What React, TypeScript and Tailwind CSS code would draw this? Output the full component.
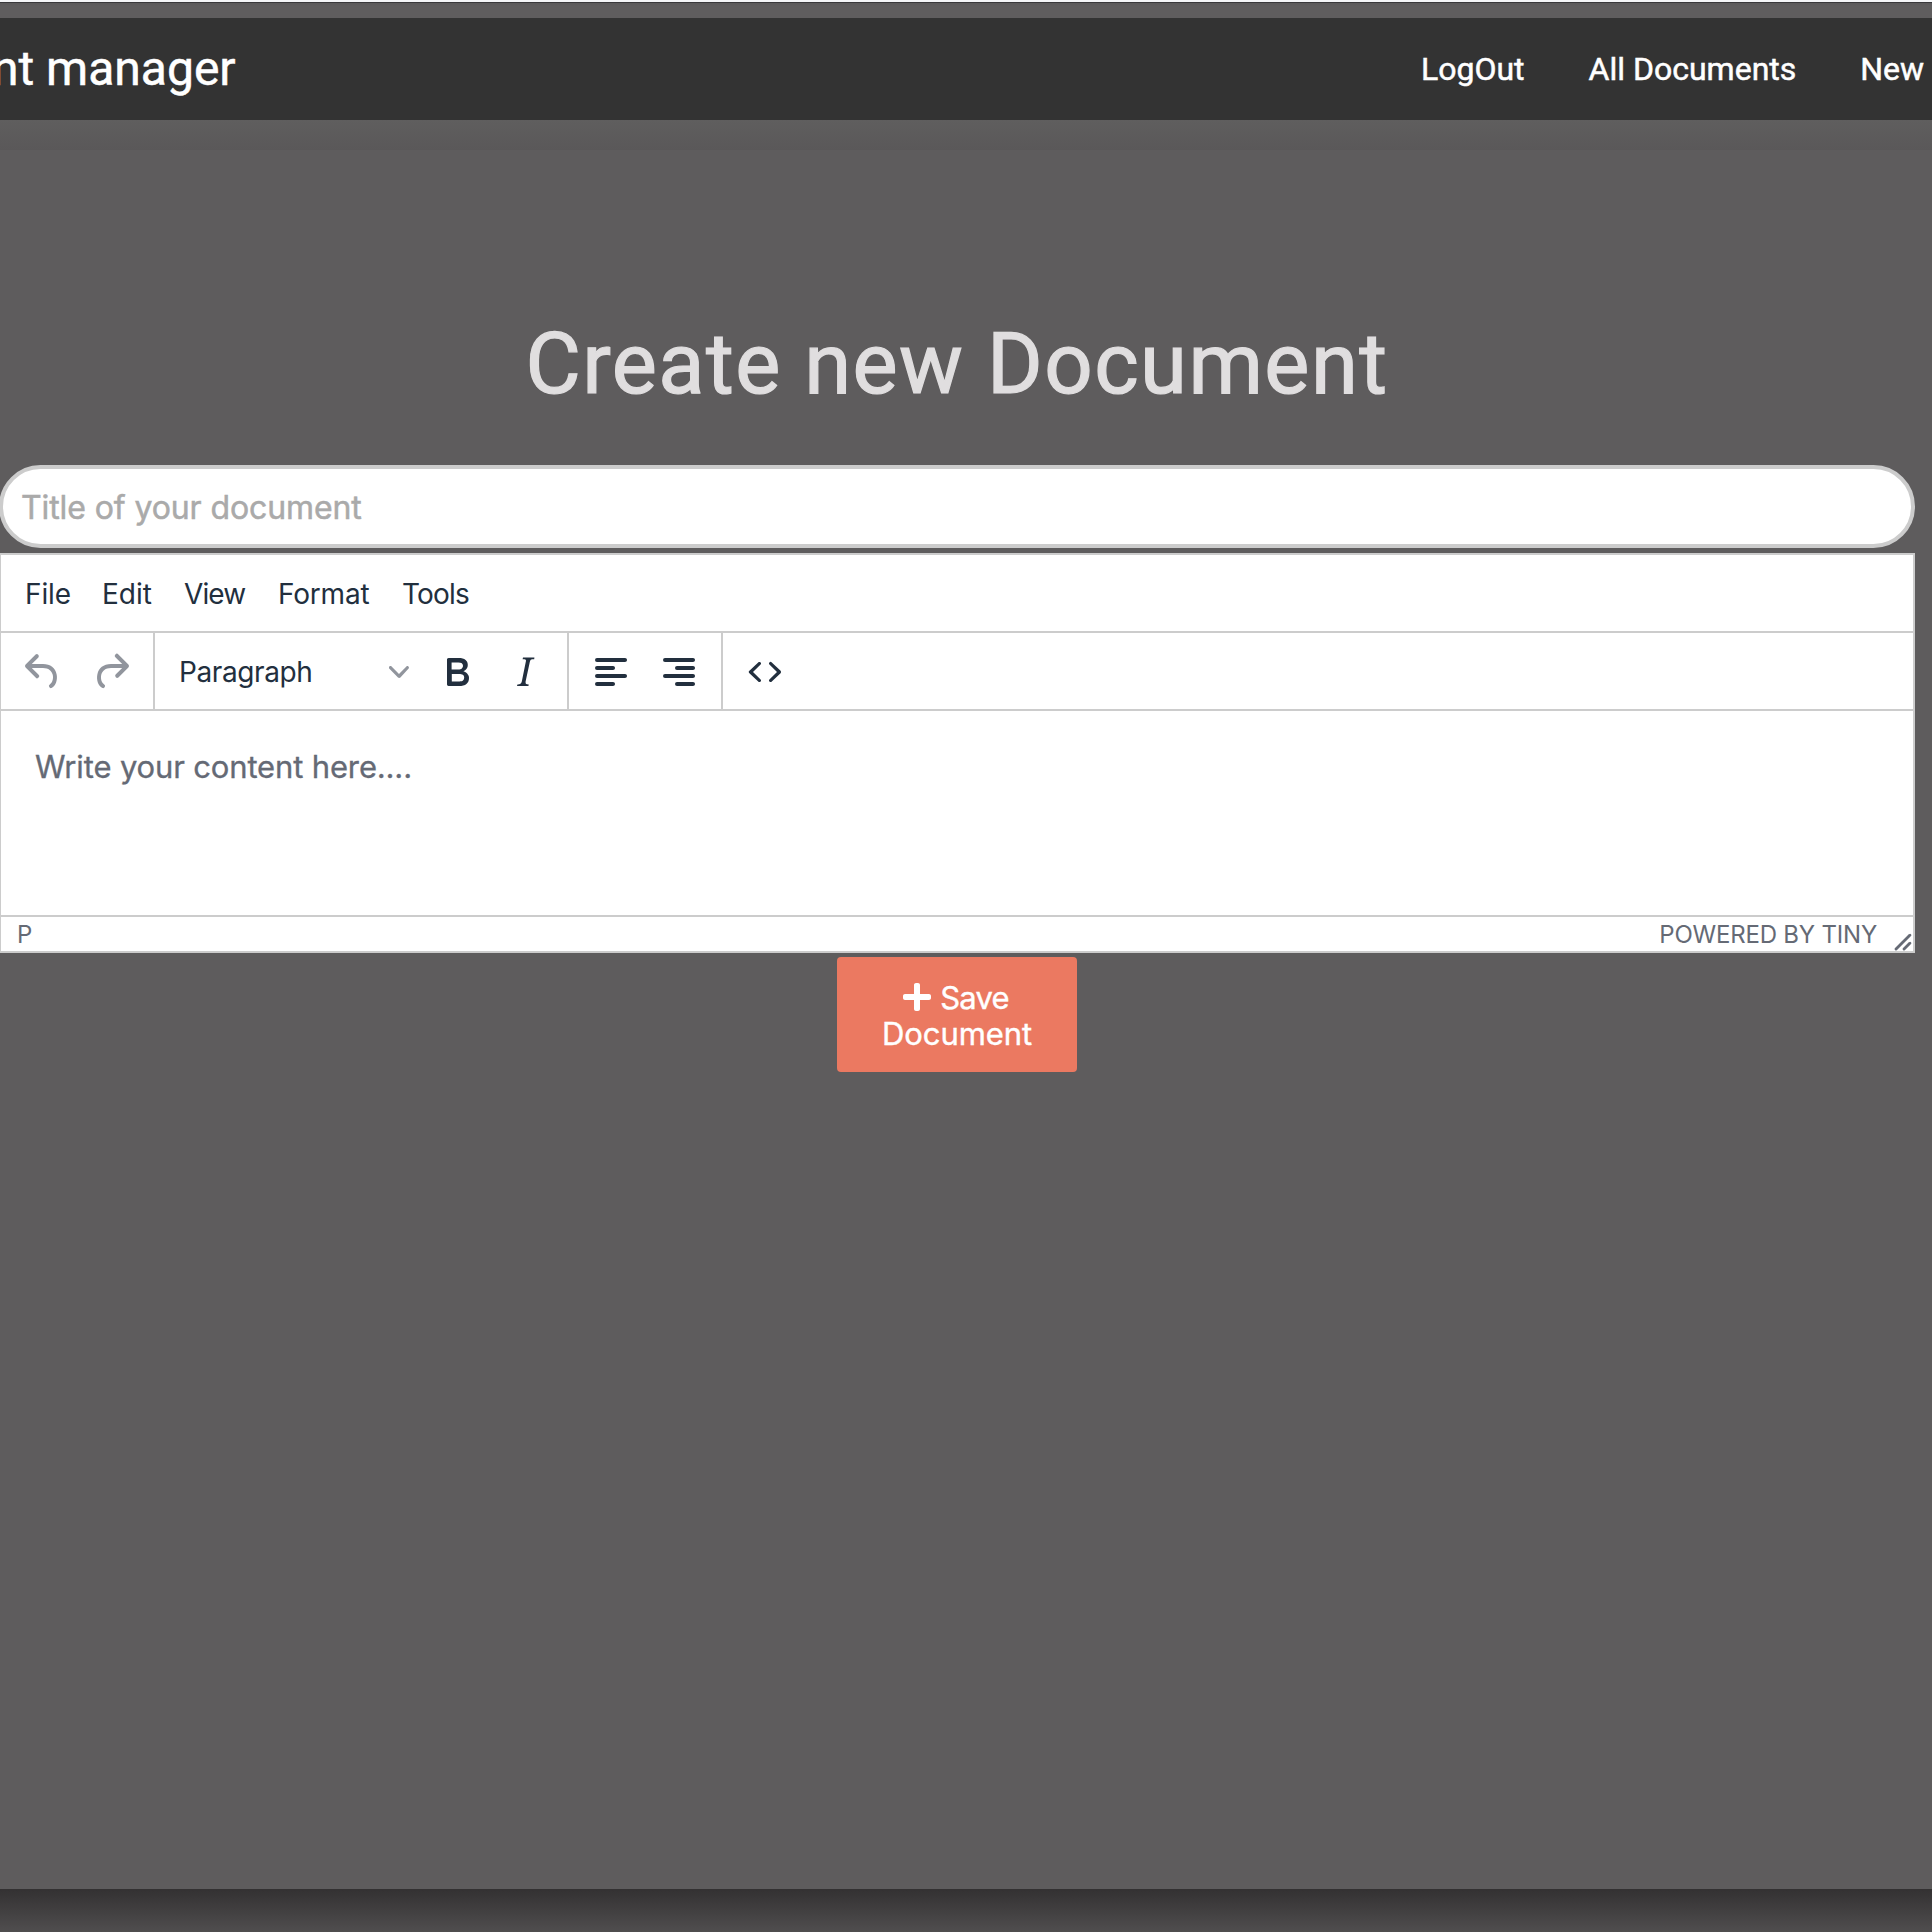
import type { ReactNode } from 'react';

const NAV_LINKS = ['LogOut', 'All Documents', 'New'];

const MENUS = [
  { label: 'File', className: 'w-[77px] tracking-[-0.1px]' },
  { label: 'Edit', className: 'w-[82px]' },
  { label: 'View', className: 'w-[94px] tracking-[-0.9px]' },
  { label: 'Format', className: 'w-[124px] tracking-[-0.2px]' },
  { label: 'Tools', className: 'tracking-[-0.8px]' },
];

const ICONS = {
  undo: 'M6.4 8H12c3.7 0 6.2 2 6.8 5.1.6 2.7-.4 5.6-2.3 6.8a1 1 0 0 1-1-1.8c1.1-.6 1.8-2.7 1.4-4.6-.5-2.1-2.1-3.5-4.9-3.5H6.4l3.3 3.3a1 1 0 1 1-1.4 1.4l-5-5a1 1 0 0 1 0-1.4l5-5a1 1 0 0 1 1.4 1.4L6.4 8Z',
  redo: 'M17.6 10H12c-2.8 0-4.4 1.4-4.9 3.5-.4 2 .3 4 1.4 4.6a1 1 0 1 1-1 1.8c-2-1.2-2.9-4.1-2.3-6.8.6-3 3-5.1 6.8-5.1h5.6l-3.3-3.3a1 1 0 1 1 1.4-1.4l5 5a1 1 0 0 1 0 1.4l-5 5a1 1 0 0 1-1.4-1.4l3.3-3.3Z',
  bold: 'M7.8 19c-.3 0-.5 0-.6-.2l-.2-.5V5.7c0-.2 0-.4.2-.5l.6-.2h5c1.5 0 2.7.3 3.5 1 .7.6 1.1 1.4 1.1 2.5a3 3 0 0 1-.6 1.9c-.4.6-1 1-1.6 1.2.4.1.9.3 1.3.6s.8.7 1 1.2c.4.4.5 1 .5 1.6 0 1.3-.4 2.3-1.3 3-.8.7-2.1 1-3.8 1H7.8Zm5-8.3c.6 0 1.2-.1 1.6-.5.4-.3.6-.7.6-1.3 0-1.1-.8-1.7-2.3-1.7H9.3v3.5h3.4Zm.5 6c.7 0 1.3-.1 1.7-.4.4-.4.6-.9.6-1.5s-.2-1-.7-1.4c-.4-.3-1-.4-2-.4H9.4v3.8h4Z',
  italic: 'm16.7 4.7-.1.9h-.3c-.6 0-1 0-1.4.3-.3.3-.4.6-.5 1.1l-2.1 9.8v.6c0 .5.4.8 1.4.8h.2l-.2.8H8l.2-.8h.2c1.1 0 1.8-.5 2-1.5l2-9.8.1-.5c0-.6-.4-.8-1.4-.8h-.3l.2-.9h5.8Z',
  alignLeft: 'M5 5h14c.6 0 1 .4 1 1s-.4 1-1 1H5a1 1 0 1 1 0-2Zm0 4h8c.6 0 1 .4 1 1s-.4 1-1 1H5a1 1 0 1 1 0-2Zm0 8h8c.6 0 1 .4 1 1s-.4 1-1 1H5a1 1 0 0 1 0-2Zm0-4h14c.6 0 1 .4 1 1s-.4 1-1 1H5a1 1 0 0 1 0-2Z',
  alignRight: 'M5 5h14c.6 0 1 .4 1 1s-.4 1-1 1H5a1 1 0 1 1 0-2Zm6 4h8c.6 0 1 .4 1 1s-.4 1-1 1h-8a1 1 0 0 1 0-2Zm0 8h8c.6 0 1 .4 1 1s-.4 1-1 1h-8a1 1 0 0 1 0-2Zm-6-4h14c.6 0 1 .4 1 1s-.4 1-1 1H5a1 1 0 0 1 0-2Z',
  code: 'M9.8 15.7c.3.3.3.8 0 1-.3.4-.9.4-1.2 0l-4.4-4.1a.8.8 0 0 1 0-1.2l4.4-4.2c.3-.3.9-.3 1.2 0 .3.3.3.8 0 1.1L6 12l3.8 3.7Zm4.4 0c-.3.3-.3.8 0 1 .4.4.9.4 1.2 0l4.4-4.1c.3-.3.3-.8 0-1.2l-4.4-4.2a.8.8 0 0 0-1.2 0c-.3.3-.3.8 0 1.1L18 12l-3.8 3.7Z',
};

function ToolButton({ icon, disabled = false }: { icon: keyof typeof ICONS; disabled?: boolean }) {
  return (
    <button
      aria-label={icon}
      className={`flex w-[68px] items-start justify-center pt-[15px] ${disabled ? 'text-[#91959d]' : 'text-[#222f3e]'}`}
    >
      <svg className="size-12" viewBox="0 0 24 24" fill="currentColor" fillRule="evenodd">
        <path d={ICONS[icon]} />
      </svg>
    </button>
  );
}

function ToolGroup({ children, last = false }: { children: ReactNode; last?: boolean }) {
  return <div className={`flex px-2 ${last ? '' : 'border-r-2 border-[#ccc]'}`}>{children}</div>;
}

function Header() {
  return (
    <>
      <div className="h-[2px] bg-[#f5f6f8]" />
      <div className="h-4 border-t border-[#39383b] bg-gradient-to-b from-[#5b595a] to-[#5f5d5e] to-20%" />
      <nav className="flex h-[102px] items-center justify-between bg-[#333] font-['Roboto',sans-serif] text-white">
        <span className="-ml-[8px] text-5xl leading-[56px] whitespace-nowrap [-webkit-text-stroke:0.5px_white]">
          nt manager
        </span>
        <ul className="flex w-[511px] gap-16 text-[32px] leading-[38px] whitespace-nowrap [-webkit-text-stroke:0.5px_white]">
          {NAV_LINKS.map((link) => (
            <li key={link}>{link}</li>
          ))}
        </ul>
      </nav>
      <div className="h-[30px] bg-gradient-to-b from-[#5f5e5e] to-[#5a5859]" />
    </>
  );
}

function Editor() {
  return (
    <section className="-ml-px flex h-[400px] w-[1916px] flex-col border-2 border-[#ccc] bg-white text-[#222f3e]">
      <div className="flex h-[78px] shrink-0 border-b-2 border-[#ccc] pt-[22px] pl-6 text-[28px] leading-[34px]">
        {MENUS.map(({ label, className }) => (
          <span key={label} className={className}>
            {label}
          </span>
        ))}
      </div>
      <div className="flex h-[78px] shrink-0 border-b-2 border-[#ccc]">
        <ToolGroup>
          <ToolButton icon="undo" disabled />
          <ToolButton icon="redo" disabled />
        </ToolGroup>
        <ToolGroup>
          <button className="flex w-[260px] items-center justify-between pr-[14px] pl-4">
            <span className="pt-px text-[28px] leading-[34px] tracking-[-0.4px]">Paragraph</span>
            <svg className="mt-[2px] size-5 text-[#91959d]" viewBox="0 0 10 10" fill="currentColor">
              <path d="M8.7 2.2c.3-.3.8-.3 1 0 .4.4.4.9 0 1.2L5.7 7.8c-.3.3-.9.3-1.2 0L.2 3.4a.8.8 0 0 1 0-1.2c.3-.3.8-.3 1.1 0L5 6l3.7-3.8Z" />
            </svg>
          </button>
          <ToolButton icon="bold" />
          <ToolButton icon="italic" />
        </ToolGroup>
        <ToolGroup>
          <ToolButton icon="alignLeft" />
          <ToolButton icon="alignRight" />
        </ToolGroup>
        <ToolGroup last>
          <ToolButton icon="code" />
        </ToolGroup>
      </div>
      <div className="flex-1 pt-[37px] pl-[34px] text-[31px] leading-[37px] tracking-[-0.15px] text-[#656a75] [-webkit-text-stroke:0.3px_#656a75]">
        Write your content here....
      </div>
      <div className="flex h-9 shrink-0 border-t-2 border-[#ccc] pt-[3px] pl-4 text-2xl leading-[29px] text-[#656a75]">
        <span className="flex-1">P</span>
        <span className="mr-4 tracking-[-0.2px]">POWERED BY TINY</span>
        <svg className="mt-3 size-5" viewBox="0 0 10 10" fill="currentColor">
          <path d="M8.1 1.1A.5.5 0 1 1 9 2l-7 7A.5.5 0 1 1 1 8l7-7ZM8.1 5.1A.5.5 0 1 1 9 6l-3 3A.5.5 0 1 1 5 8l3-3Z" />
        </svg>
      </div>
    </section>
  );
}

export default function App() {
  return (
    <div className="flex h-[1932px] w-full flex-col overflow-hidden bg-[#5e5c5d] font-['Inter',sans-serif]">
      <Header />
      <main className="flex flex-1 flex-col">
        <h1 className="mt-[164px] w-[1914px] text-center font-['Roboto',sans-serif] text-[85px] leading-[100px] tracking-[1.45px] text-[#e0dedf] [-webkit-text-stroke:1.2px_#e0dedf]">
          Create new Document
        </h1>
        <div className="mt-[51px] -ml-px h-[83px] w-[1916px] rounded-full border-4 border-[#ccc] bg-white pt-[19px] pl-[18px]">
          <input
            placeholder="Title of your document"
            className="block h-[39px] w-[1800px] text-[32px] leading-[39px] tracking-[-0.1px] outline-none placeholder:text-[#aaa] [-webkit-text-stroke:0.5px_#aaa]"
          />
        </div>
        <div className="mt-[5px]">
          <Editor />
        </div>
        <button className="mt-1 ml-[837px] h-[115px] w-[240px] rounded bg-[#eb7961] pt-[2px] text-[31px] leading-9 text-white [-webkit-text-stroke:0.4px_white]">
          <span className="flex justify-center">
            <svg className="mt-px mr-[9px] h-8 w-7" viewBox="0 0 448 512" fill="currentColor">
              <path d="M416 208H272V64c0-17.67-14.33-32-32-32h-32c-17.67 0-32 14.33-32 32v144H32c-17.67 0-32 14.33-32 32v32c0 17.67 14.33 32 32 32h144v144c0 17.67 14.33 32 32 32h32c17.67 0 32-14.33 32-32V304h144c17.67 0 32-14.33 32-32v-32c0-17.67-14.33-32-32-32z" />
            </svg>
            <span className="mr-[2px] tracking-[-0.8px]">Save</span>
          </span>
          <span className="block tracking-[-0.1px]">Document</span>
        </button>
      </main>
      <footer className="h-[43px] shrink-0 bg-gradient-to-b from-[#333132] to-[#504e4f]" />
    </div>
  );
}
